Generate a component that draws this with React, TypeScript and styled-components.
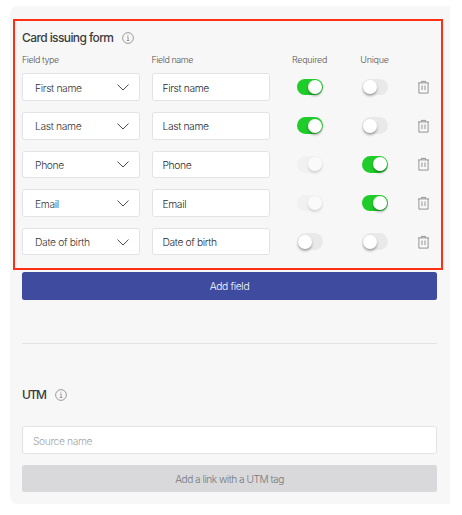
import React from 'react';
import styled, { createGlobalStyle, css } from 'styled-components';

const GlobalStyle = createGlobalStyle`
  * { box-sizing: border-box; }
  body { margin: 0; background: #fff; font-family: Inter, "Open Sans", sans-serif; color: #3c3c3e; }
  button, input { font-family: inherit; }
`;

const Panel = styled.main`
  width: 440px;
  height: 498px;
  margin: 6px 0 0 10px;
  padding: 13px 7px 0 3px;
  background: #f7f7f7;
  border-radius: 8px 0 0 8px;
`;

const FormSection = styled.section`
  height: 251px;
  border: 2px solid #fd3013;
  padding: 0 0 0 7px;
`;

const Heading = styled.h2<{ $spacing: string }>`
  display: flex;
  align-items: center;
  gap: 9px;
  height: 14px;
  margin: 0;
  font-size: 12px;
  line-height: 14px;
  font-weight: 500;
  letter-spacing: ${({ $spacing }) => $spacing};
  white-space: nowrap;
  svg { flex: none; }
`;

const FormHeading = styled(Heading)`
  margin-top: 10px;
`;

const columns = css`
  display: grid;
  grid-template-columns: 129.5px 145px 65px 56px 12px;
`;

const ColumnLabels = styled.div`
  ${columns}
  margin-top: 9px;
  height: 12px;
  font-size: 9px;
  line-height: 12px;
  font-weight: 300;
  letter-spacing: -0.45px;
  color: #565658;
  white-space: nowrap;
`;

const SwitchLabel = styled.span`
  display: flex;
  justify-content: center;
  width: 26px;
  letter-spacing: -0.28px;
`;

const Rows = styled.div`
  display: grid;
  grid-template-rows: repeat(5, 27.6px);
  row-gap: 11.05px;
  margin-top: 7.3px;
`;

const FieldRow = styled.div`
  ${columns}
  align-items: center;
`;

const fieldBox = css`
  height: 27.6px;
  border: 1px solid #e2e2e7;
  border-radius: 2.5px;
  background: #fff;
  font-size: 10.3px;
`;

const Select = styled.button`
  ${fieldBox}
  display: flex;
  align-items: center;
  justify-content: space-between;
  width: 118px;
  padding: 1px 10px 0 12px;
  font-weight: 300;
  letter-spacing: -0.34px;
  color: #343436;
`;

const TextInput = styled.input`
  ${fieldBox}
  width: 118px;
  padding: 1px 10px 0;
  font-weight: 350;
  letter-spacing: -0.37px;
  color: #29292b;
  outline: none;
`;

const Toggle = styled.button<{ $on: boolean; $faded?: boolean }>`
  display: flex;
  align-items: center;
  justify-content: ${({ $on }) => ($on ? 'flex-end' : 'flex-start')};
  width: 26px;
  height: 16.5px;
  padding: 0 1px;
  border: 0;
  border-radius: 9px;
  background: ${({ $on, $faded }) => ($on && !$faded ? '#20cc2a' : '#e9e9e9')};
  opacity: ${({ $faded }) => ($faded ? 0.4 : 1)};
`;

const Knob = styled.span`
  width: 14px;
  height: 14px;
  border-radius: 50%;
  background: #fff;
  box-shadow: 0 2px 2.5px rgba(0, 0, 0, 0.32);
`;

const IconButton = styled.button`
  display: flex;
  width: 12px;
  height: 14px;
  padding: 0;
  border: 0;
  background: none;
`;

const actionButton = css`
  display: flex;
  align-items: center;
  justify-content: center;
  width: 415px;
  margin-left: 9px;
  padding: 0;
  border: 0;
  border-radius: 2.5px;
  font-weight: 300;
`;

const AddFieldButton = styled.button`
  ${actionButton}
  height: 27.5px;
  margin-top: 2px;
  background: #3f4b9f;
  color: #fff;
  font-size: 10.3px;
  letter-spacing: -0.35px;
`;

const Divider = styled.hr`
  height: 1px;
  margin: 43.5px 0 0 9px;
  width: 415px;
  border: 0;
  background: #e3e3e5;
`;

const UtmHeading = styled(Heading)`
  margin: 44px 0 0 9px;
`;

const SourceInput = styled(TextInput)`
  display: block;
  width: 415px;
  height: 28px;
  margin: 24px 0 0 9px;
  letter-spacing: -0.4px;
  &::placeholder { color: #a4a4a8; opacity: 1; font-weight: 300; }
`;

const AddLinkButton = styled.button`
  ${actionButton}
  height: 27px;
  margin-top: 11px;
  background: #d9d9db;
  color: #77777a;
  font-size: 10.2px;
  letter-spacing: -0.51px;
`;

const InfoIcon = () => (
  <svg width="12" height="12" viewBox="0 0 12 12" fill="none" stroke="#7f7f82" strokeWidth="0.75">
    <circle cx="6" cy="6" r="5.4" />
    <path d="M5 5h1.1v3.4M4.7 8.5h2.7M5.5 3.2h1" />
  </svg>
);

const Chevron = () => (
  <svg width="12" height="7" viewBox="0 0 12 7" fill="none" stroke="#4b4b4d" strokeWidth="1">
    <path d="M.5.6 6 6 11.5.6" />
  </svg>
);

const TrashIcon = () => (
  <svg width="12" height="14" viewBox="0 0 12 14" fill="none" stroke="#7c7c7e" strokeWidth="0.8">
    <path d="M0 2.9h11M3.4 2.7V1.4h4.2v1.3M.9 3v10.1h9.2V3M4 5.5V10M7 5.5V10" />
  </svg>
);

interface Field {
  name: string;
  required: boolean;
  unique: boolean;
  locked?: boolean;
}

const fields: Field[] = [
  { name: 'First name', required: true, unique: false },
  { name: 'Last name', required: true, unique: false },
  { name: 'Phone', required: true, unique: true, locked: true },
  { name: 'Email', required: true, unique: true, locked: true },
  { name: 'Date of birth', required: false, unique: false },
];

export default function App() {
  return (
    <>
      <GlobalStyle />
      <Panel>
        <FormSection>
          <FormHeading $spacing="-0.6px">Card issuing form <InfoIcon /></FormHeading>
          <ColumnLabels>
            <span>Field type</span>
            <span>Field name</span>
            <SwitchLabel>Required</SwitchLabel>
            <SwitchLabel>Unique</SwitchLabel>
          </ColumnLabels>
          <Rows>
            {fields.map((field) => (
              <FieldRow key={field.name}>
                <Select type="button">{field.name}<Chevron /></Select>
                <TextInput defaultValue={field.name} />
                <Toggle type="button" aria-label="Required" $on={field.required} $faded={field.locked}><Knob /></Toggle>
                <Toggle type="button" aria-label="Unique" $on={field.unique}><Knob /></Toggle>
                <IconButton type="button" aria-label="Delete"><TrashIcon /></IconButton>
              </FieldRow>
            ))}
          </Rows>
        </FormSection>
        <AddFieldButton type="button">Add field</AddFieldButton>
        <Divider />
        <UtmHeading $spacing="-1.3px">UTM <InfoIcon /></UtmHeading>
        <SourceInput placeholder="Source name" />
        <AddLinkButton type="button" disabled>Add a link with a UTM tag</AddLinkButton>
      </Panel>
    </>
  );
}
